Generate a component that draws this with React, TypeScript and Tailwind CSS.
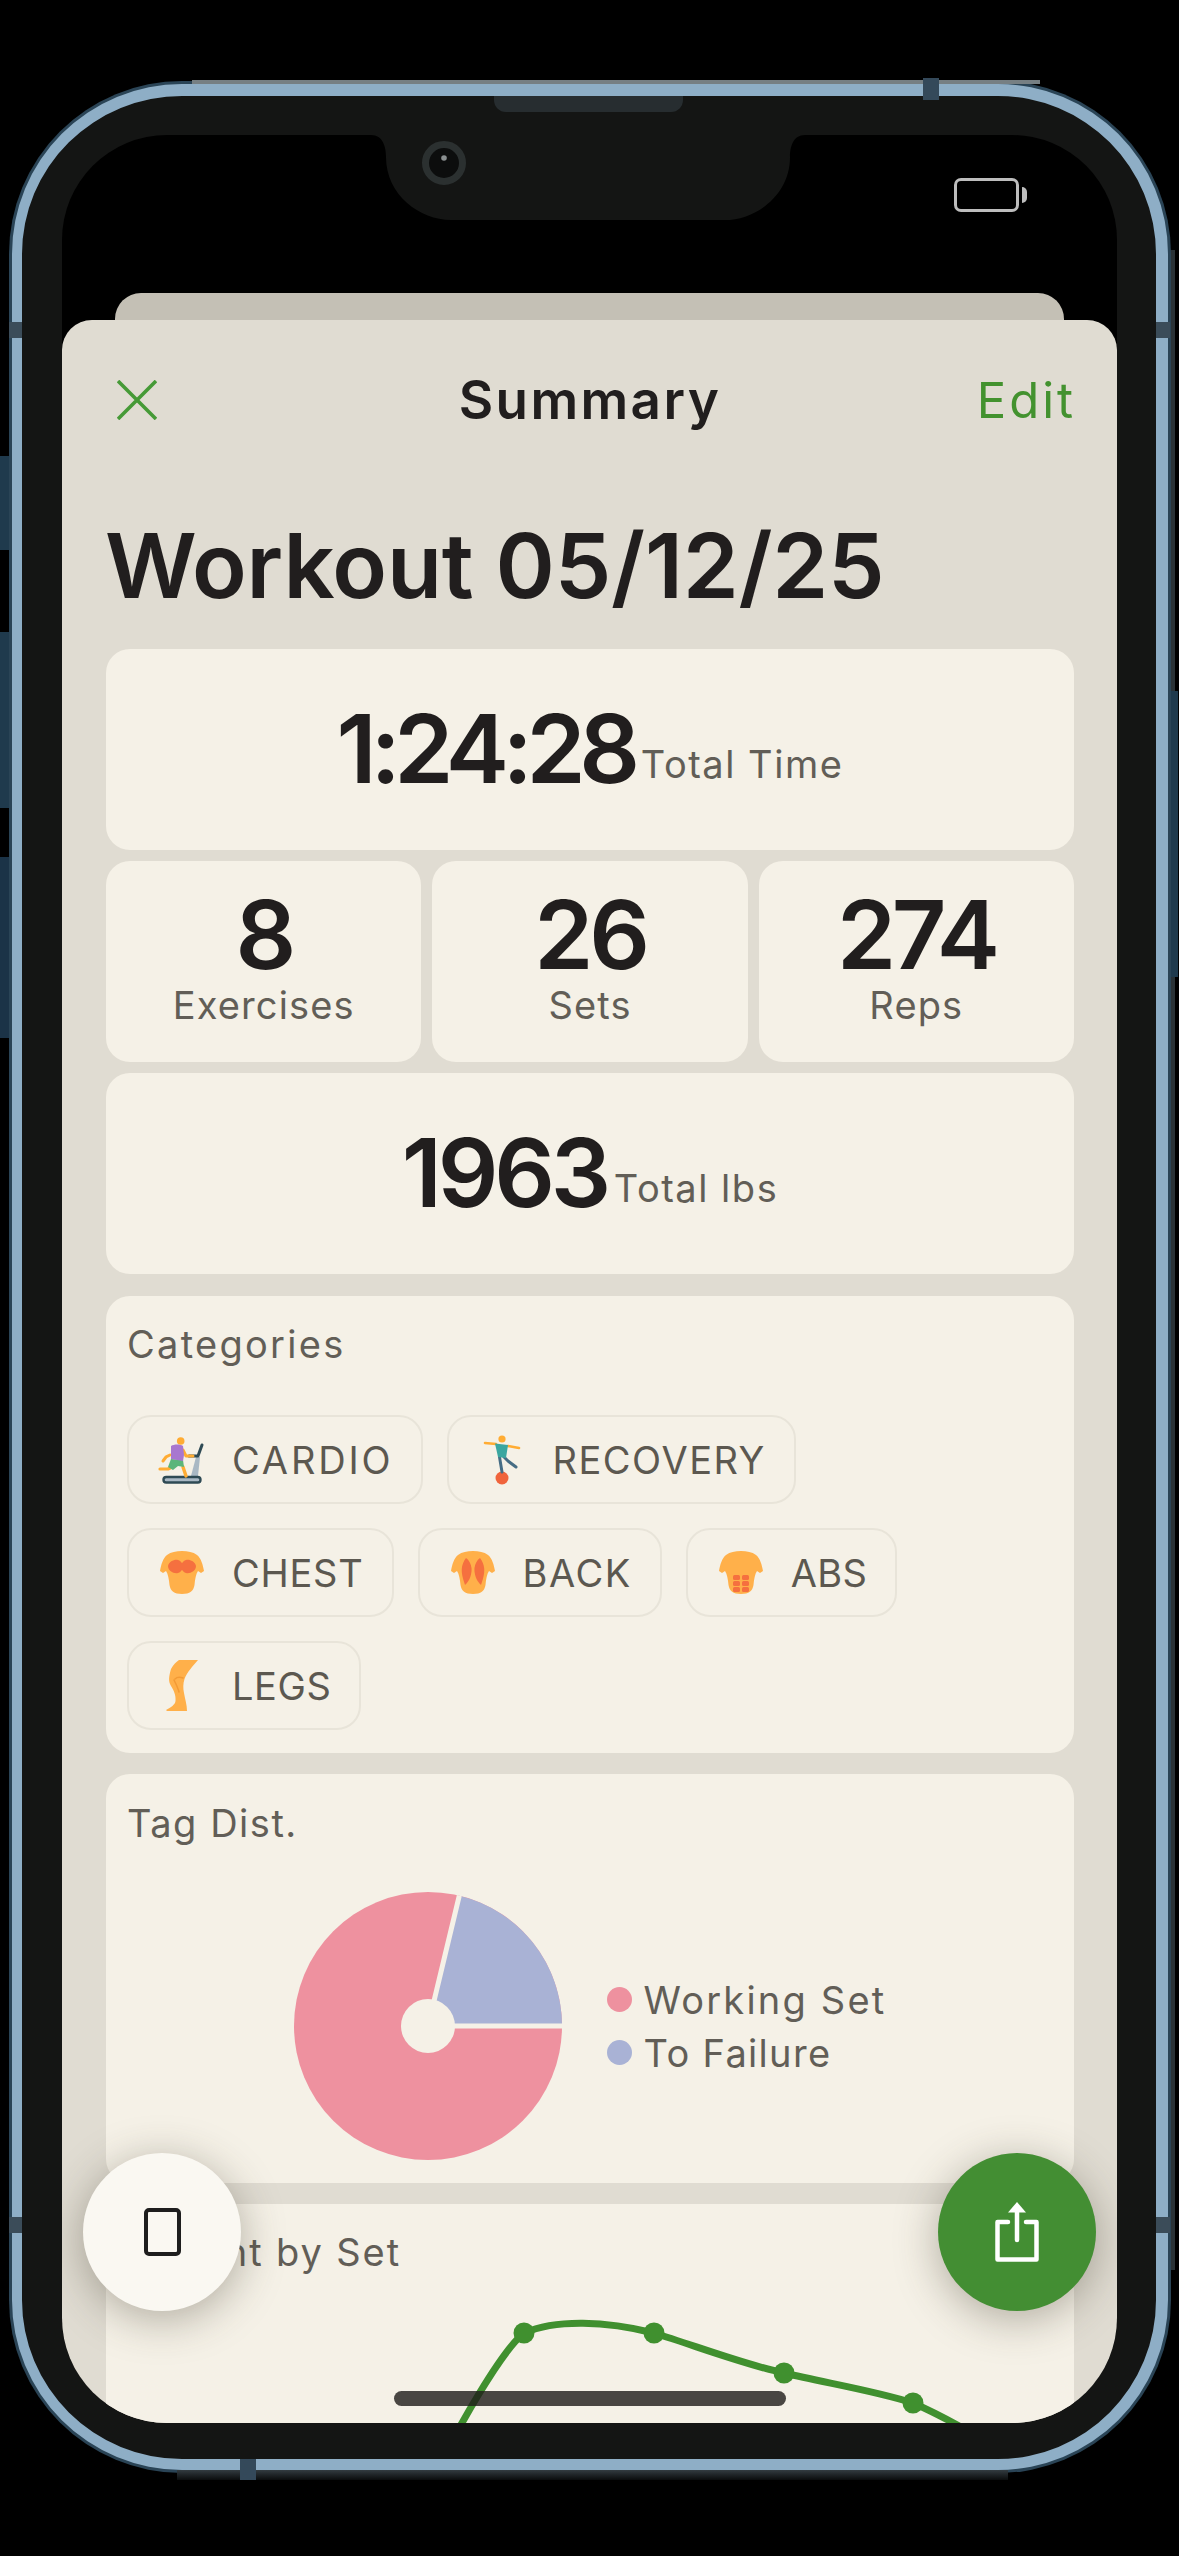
import React from 'react';

// Small hand drawn emoji style icons for the category chips
function TreadmillIcon() {
  return (
    <svg viewBox="0 0 48 48" className="w-[48px] h-[48px]">
      <path d="M33 40 L38 21 L42 21 L40 40 Z" fill="#a9b8c4" />
      <path d="M31 20 H40 L44 9" fill="none" stroke="#2e4a54" strokeWidth="3" strokeLinecap="round" strokeLinejoin="round" />
      <rect x="5.5" y="41" width="37" height="5.5" rx="2.7" fill="#a9b8c4" stroke="#2e4a54" strokeWidth="2.4" />
      <circle cx="22.7" cy="5" r="3.8" fill="#ffac33" />
      <path d="M12 19 L8 21 L5 25" fill="none" stroke="#ffac33" strokeWidth="3" strokeLinecap="round" />
      <path d="M25 14 L28 20 L35 20" fill="none" stroke="#ffac33" strokeWidth="3" strokeLinecap="round" strokeLinejoin="round" />
      <path d="M14 31 L10 33 L2 33" fill="none" stroke="#ffac33" strokeWidth="3.2" strokeLinecap="round" strokeLinejoin="round" />
      <path d="M25 31 L28 40" fill="none" stroke="#ffac33" strokeWidth="3.4" strokeLinecap="round" />
      <path d="M13 23 L25 24 L26 31 L20 30 L15 34 L10 31 Z" fill="#5cb57a" />
      <path d="M13 10 C16 8 22 8 25 10 L26 19 L25 25 L13 23 Z" fill="#a877cf" />
    </svg>
  );
}

function BalanceIcon() {
  return (
    <svg viewBox="0 0 48 52" className="w-[48px] h-[52px]">
      <circle cx="24" cy="44" r="6.5" fill="#f0643c" />
      <circle cx="24" cy="5" r="3.6" fill="#ffac33" />
      <path d="M7 9 L18 10 M30 12 L41 14" stroke="#ffac33" strokeWidth="2.6" strokeLinecap="round" />
      <path d="M21.5 23 L24 38" stroke="#466d85" strokeWidth="3" strokeLinecap="round" />
      <path d="M26 23 L30 27 L38 33" fill="none" stroke="#466d85" strokeWidth="3" strokeLinecap="round" strokeLinejoin="round" />
      <path d="M17 9.5 L30 11 L28 24 L20 23 Z" fill="#3aa6a0" />
    </svg>
  );
}

const torso =
  'M22 0 C28 0 33 1 37 4 C41 7 43 14 44 20 L41 22 L38 20 C36 23 35 28 34.5 34 C33.5 40 30 43 22 43 C14 43 10.5 40 9.5 34 C9 28 8 23 6 20 L3 22 L0 20 C1 14 3 7 7 4 C11 1 16 0 22 0 Z';

function ChestIcon() {
  return (
    <svg viewBox="0 0 44 43" className="w-[44px] h-[43px]">
      <path d={torso} fill="#ffb04a" />
      <path d="M8 15 C9 10 15 8 18 9 C20 9.500 21 11 22 12 C23 11 24 9.500 26 9 C29 8 35 10 36 15 C36 20 30 23 26 22 C24 21.500 23 20 22 19 C21 20 20 21.500 18 22 C14 23 8 20 8 15 Z" fill="#f5703f" />
    </svg>
  );
}

function BackIcon() {
  return (
    <svg viewBox="0 0 44 43" className="w-[44px] h-[43px]">
      <path d={torso} fill="#ffb04a" />
      <path d="M15 7 C10 14 9 20 14 34 C19 30 21 22 20.500 17 C20 13 18 9 15 7 Z" fill="#f5703f" />
      <path d="M29 7 C34 14 35 20 30 34 C25 30 23 22 23.500 17 C24 13 26 9 29 7 Z" fill="#f5703f" />
    </svg>
  );
}

function AbsIcon() {
  return (
    <svg viewBox="0 0 44 43" className="w-[44px] h-[43px]">
      <path d={torso} fill="#ffb04a" />
      {[24, 30, 36].map(y => (
        <g key={y} fill="#f5703f">
          <rect x="14" y={y} width="7" height="5" rx="1.500" />
          <rect x="23" y={y} width="7" height="5" rx="1.500" />
        </g>
      ))}
    </svg>
  );
}

function LegIcon() {
  return (
    <svg viewBox="0 0 32 53" className="w-[32px] h-[53px]">
      <path d="M13 1 H32 C27 7 21 13 18.500 20 C17 25 17 29 18 34 C19 40 21 46 21 52 H1 L0 51 C5 48 9 46 9.500 42 C10 36 8 32 5 27 C2 22 3 17 5 10 C7 6 10 3 13 1 Z" fill="#ffb04a" />
      <path d="M8 21 C10 25 12 29 13 33 M17 19 C14 18 11 18 9 20" fill="none" stroke="#f39a35" strokeWidth="1.500" strokeLinecap="round" />
    </svg>
  );
}

const categories = [
  [
    { label: 'CARDIO', icon: <TreadmillIcon />, tracking: 'tracking-[0.075em]' },
    { label: 'RECOVERY', icon: <BalanceIcon />, tracking: 'tracking-[0.04em]' },
  ],
  [
    { label: 'CHEST', icon: <ChestIcon />, tracking: 'tracking-[0.02em]' },
    { label: 'BACK', icon: <BackIcon />, tracking: 'tracking-[0.04em]' },
    { label: 'ABS', icon: <AbsIcon />, tracking: 'tracking-[0.01em]' },
  ],
  [{ label: 'LEGS', icon: <LegIcon />, tracking: 'tracking-[0.015em]' }],
];

function Chip({ label, icon, tracking }: { label: string; icon: React.ReactNode; tracking: string }) {
  return (
    <div className="flex items-center h-[89px] pl-[29px] pr-[28px] rounded-[24px] border-2 border-[#e8e4d9] bg-[#f5f1e7]">
      <div className="w-[48px] flex items-center justify-center">{icon}</div>
      <span className={'ml-[26px] text-[38px] leading-none text-[#5c5850] ' + tracking}>{label}</span>
    </div>
  );
}

function Card({ className, children }: { className?: string; children: React.ReactNode }) {
  return <div className={'bg-[#f5f1e7] rounded-[24px] ' + (className ?? '')}>{children}</div>;
}

function StatRow({ value, label, tracking }: { value: string; label: string; tracking: string }) {
  return (
    <Card className="h-[201px] pb-[2px] flex items-center justify-center">
      <div className="flex items-baseline gap-[7px]">
        <span className={'text-[95px] leading-none font-semibold text-[#211e1e] ' + tracking}>{value}</span>
        <span className="text-[38px] leading-none text-[#625e57] tracking-[0.04em] -translate-y-[5px]">{label}</span>
      </div>
    </Card>
  );
}

function StatCell({ value, label }: { value: string; label: string }) {
  return (
    <Card className="flex-1 h-[201px] pb-[10px] flex flex-col items-center justify-center">
      <span className="text-[95px] leading-[96px] font-semibold text-[#211e1e] tracking-[-0.045em]">{value}</span>
      <span className="text-[38px] leading-[44px] text-[#625e57] tracking-[0.03em]">{label}</span>
    </Card>
  );
}

function TagPie() {
  return (
    <svg viewBox="0 0 268 268" className="w-[268px] h-[268px] shrink-0">
      <circle cx="134" cy="134" r="134" fill="#ee919f" />
      <path d="M134 134 L165.300 3.700 A134 134 0 0 1 268 134 Z" fill="#a9b2d5" />
      <path d="M268 134 H134 L165.300 3.700" fill="none" stroke="#f5f1e7" strokeWidth="5" />
      <circle cx="134" cy="134" r="27" fill="#f5f1e7" />
    </svg>
  );
}

function WeightChart() {
  const points = [
    [418, 32],
    [548, 32],
    [678, 72],
    [807, 102],
  ];
  return (
    <svg viewBox="0 0 968 200" className="block w-[968px] h-[200px] mt-[27px]">
      <path
        d="M330 172 C350 130 395 50 418 32 C450 18 500 20 548 32 C590 45 640 64 678 72 C720 82 770 90 807 102 C830 112 860 128 900 152"
        fill="none"
        stroke="#40902f"
        strokeWidth="7"
      />
      {points.map(([x, y]) => (
        <circle key={x} cx={x} cy={y} r="10.500" fill="#40902f" />
      ))}
    </svg>
  );
}

function Notch() {
  return (
    <svg viewBox="0 0 434 85" className="absolute top-0 left-[309px] w-[434px] h-[85px]">
      <path d="M0 0 H434 C422 0 419 12 419 22 C419 60 385 85 354 85 H80 C49 85 15 60 15 22 C15 12 12 0 0 0 Z" fill="#141514" />
      <circle cx="73" cy="28" r="18.500" fill="#0c0d0d" stroke="#2b3030" strokeWidth="7" />
      <circle cx="73" cy="23" r="2.800" fill="#8a8f90" />
    </svg>
  );
}

export default function App() {
  return (
    <div className="relative w-[1179px] h-[2556px] bg-black pt-[84px] pl-[12px] overflow-hidden [font-family:Inter,'Liberation_Sans',sans-serif]">
      {/* side buttons */}
      <div className="absolute left-0 top-[456px] w-[9px] h-[94px] bg-[#1f3a4d]" />
      <div className="absolute left-0 top-[632px] w-[9px] h-[176px] bg-[#1f3a4d]" />
      <div className="absolute left-0 top-[857px] w-[9px] h-[181px] bg-[#1b3347]" />
      <div className="absolute left-[1168px] top-[250px] w-[7px] h-[2020px] bg-[#2a3236]" />
      <div className="absolute left-[1168px] top-[691px] w-[10px] h-[286px] bg-[#1f3a4d]" />

      {/* phone body */}
      <div className="relative w-[1156px] h-[2386px] rounded-[170px] border-t-[12px] border-b-[11px] border-l-[10px] border-r-[12px] border-[#8eaec6] bg-[#141514] pt-[39px] pl-[40px] pr-[39px] pb-[36px] shadow-[0_0_0_3px_#2a4456]">
        <div className="absolute -top-[16px] left-[170px] w-[848px] h-[4px] bg-[#767f83]" />
        <div className="absolute -bottom-[21px] left-[155px] w-[831px] h-[10px] bg-gradient-to-b from-[#333c41] to-[#0b0d0e]" />
        {/* antenna bands */}
        <div className="absolute -top-[18px] left-[901px] w-[16px] h-[22px] bg-[#34495a]" />
        <div className="absolute -bottom-[21px] left-[218px] w-[16px] h-[21px] bg-[#34495a]" />
        <div className="absolute top-[226px] -left-[13px] w-[13px] h-[16px] bg-[#3b4c59]" />
        <div className="absolute top-[226px] -right-[14px] w-[14px] h-[16px] bg-[#3b4c59]" />
        <div className="absolute top-[2121px] -left-[13px] w-[13px] h-[16px] bg-[#3b4c59]" />
        <div className="absolute top-[2121px] -right-[14px] w-[14px] h-[16px] bg-[#3b4c59]" />
        {/* speaker */}
        <div className="absolute top-0 left-[472px] w-[189px] h-[16px] rounded-b-[12px] bg-[#272d30]" />

        <div className="relative w-full h-full rounded-[105px] bg-black overflow-hidden flex flex-col">
          <Notch />

          {/* status bar */}
          <div className="h-[158px] shrink-0 flex justify-end pt-[43px] pr-[90px]">
            <div className="flex items-center h-[34px] gap-[3px]">
              <div className="w-[65px] h-[34px] rounded-[7px] border-[3px] border-[#bdbdbd]" />
              <div className="w-[5px] h-[16px] rounded-r-full bg-[#bdbdbd]" />
            </div>
          </div>

          <div className="mx-[53px] h-[27px] shrink-0 rounded-t-[26px] bg-[#c4c0b5]" />

          {/* sheet */}
          <div className="flex-1 min-h-0 overflow-hidden rounded-t-[30px] bg-[#e0dcd2] pl-[44px] pr-[43px]">
            <div className="h-[160px] grid grid-cols-3 items-center">
              <svg viewBox="0 0 40 40" className="w-[40px] h-[40px] ml-[11px]">
                <path d="M1 1 L39 39 M39 1 L1 39" stroke="#469a37" strokeWidth="3.600" />
              </svg>
              <div className="text-center text-[53px] leading-none font-semibold text-[#211e1e] tracking-[0.045em]">Summary</div>
              <div className="text-right -mr-[2px] text-[49px] leading-none text-[#43922f] tracking-[0.06em]">Edit</div>
            </div>

            <h1 className="mt-[41px] mb-[38px] -ml-[1px] text-[90px] leading-[90px] font-semibold text-[#211e1e] tracking-[-0.003em]">Workout 05/12/25</h1>

            <div className="flex flex-col gap-[11px]">
              <StatRow value="1:24:28" label="Total Time" tracking="tracking-[-0.067em]" />
              <div className="flex gap-[11px]">
                <StatCell value="8" label="Exercises" />
                <StatCell value="26" label="Sets" />
                <StatCell value="274" label="Reps" />
              </div>
              <StatRow value="1963" label="Total lbs" tracking="tracking-[-0.045em]" />
            </div>

            <div className="mt-[22px] flex flex-col gap-[21px]">
              <Card className="h-[457px] pl-[21px] pt-[26px]">
                <div className="text-[38px] leading-[44px] text-[#625e57] tracking-[0.06em]">Categories</div>
                <div className="mt-[49px] flex flex-col gap-[24px]">
                  {categories.map((row, i) => (
                    <div key={i} className="flex gap-[24px]">
                      {row.map(c => (
                        <Chip key={c.label} label={c.label} icon={c.icon} tracking={c.tracking} />
                      ))}
                    </div>
                  ))}
                </div>
              </Card>

              <Card className="h-[409px] pl-[21px] pt-[27px]">
                <div className="text-[38px] leading-[44px] text-[#625e57] tracking-[0.04em]">Tag Dist.</div>
                <div className="mt-[47px] -ml-[21px] flex items-center justify-center gap-[45px]">
                  <TagPie />
                  <div className="flex flex-col gap-[9px]">
                    <div className="flex items-center gap-[12px]">
                      <span className="w-[25px] h-[25px] rounded-full bg-[#ee919f]" />
                      <span className="text-[38px] leading-[44px] text-[#625e57] tracking-[0.058em]">Working Set</span>
                    </div>
                    <div className="flex items-center gap-[12px]">
                      <span className="w-[25px] h-[25px] rounded-full bg-[#a9b2d5]" />
                      <span className="text-[38px] leading-[44px] text-[#625e57] tracking-[0.035em]">To Failure</span>
                    </div>
                  </div>
                </div>
              </Card>

              <Card className="h-[400px] pt-[26px]">
                <div className="pl-[21px] text-[38px] leading-[44px] text-[#625e57] tracking-[0.05em]">Weight by Set</div>
                <WeightChart />
              </Card>
            </div>
          </div>

          {/* floating buttons */}
          <button className="absolute left-[21px] bottom-[112px] w-[158px] h-[158px] rounded-full bg-[#faf8f2] flex items-center justify-center shadow-[0_8px_44px_rgba(60,55,40,0.38)]">
            <span className="block w-[37px] h-[48px] rounded-[5px] border-[4.500px] border-[#1e1e1e]" />
          </button>
          <button className="absolute right-[21px] bottom-[112px] w-[158px] h-[158px] rounded-full bg-[#438e33] flex items-center justify-center shadow-[0_8px_44px_rgba(60,55,40,0.38)]">
            <svg viewBox="0 0 44 60" className="w-[44px] h-[60px]">
              <path d="M13 20 H2.500 V57.500 H41.500 V20 H31" fill="none" stroke="#fff" strokeWidth="4.500" strokeLinecap="round" strokeLinejoin="round" />
              <path d="M22 8 V38" stroke="#fff" strokeWidth="4.500" strokeLinecap="round" />
              <path d="M22 0 L31 10.500 H13 Z" fill="#fff" />
            </svg>
          </button>
          <div className="absolute left-1/2 -translate-x-1/2 bottom-[17px] w-[392px] h-[15px] rounded-full bg-[#1e1c19]/80" />
        </div>
      </div>
    </div>
  );
}
